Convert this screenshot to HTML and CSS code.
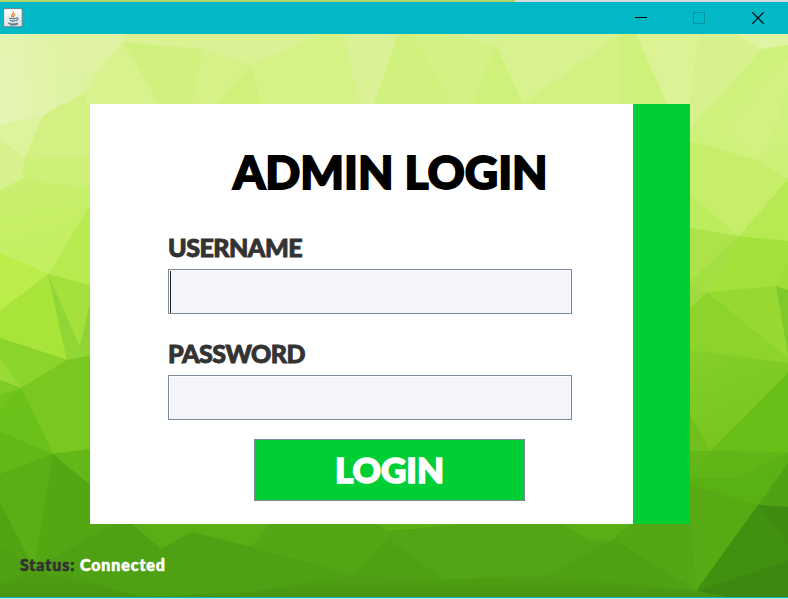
FILE: index.html
```html
<!DOCTYPE html>
<html lang="en">
<head>
<meta charset="utf-8">
<title>Admin Login</title>
<link rel="stylesheet" href="styles.css">
</head>
<body>
<div class="backdrop"></div>
<header class="titlebar">
  <svg class="java" viewBox="0 0 20 20" aria-hidden="true">
    <defs><linearGradient id="tile" x2="0" y2="1"><stop stop-color="#fff"/><stop offset="1" stop-color="#dddfe0"/></linearGradient></defs>
    <rect x=".6" y=".6" width="18.6" height="18.2" rx="1.5" fill="url(#tile)" stroke="#66858b"/>
    <path d="M10.3 3.5c1.5 2-3.4 3-1 5.7M12.5 6.2c-3 1.3-1.5 2-2.2 3.4" fill="none" stroke="#ee8434" stroke-width="1.4"/>
    <path d="M6 10.3q3.500 1 7 0M7 12.600q3 1 5.500 0M13 10q3-.5 1.800 1.300-.7.900-2 1.300M5 15q5 2 9.500 0M7 16.800q5 .7 8-1" fill="none" stroke="#547991" stroke-width="1.100"/>
  </svg>
  <div class="controls">
    <svg viewBox="0 0 12 12" aria-hidden="true"><path d="M0 5.500h12" stroke="#000"/></svg>
    <svg viewBox="0 0 12 12" aria-hidden="true"><path d="M.5.5h11v11H.5z" fill="none" stroke="#0292a0"/></svg>
    <svg viewBox="0 0 12 12" aria-hidden="true"><path d="M.3.3l11.400 11.400M11.700.3L.3 11.700" stroke="#000" stroke-width="1.200"/></svg>
  </div>
</header>
<main class="content">
  <svg class="facets" viewBox="0 34 788 563" preserveAspectRatio="none" aria-hidden="true">
    <defs>
      <linearGradient id="corner" gradientUnits="userSpaceOnUse" x1="0" y1="80" x2="100" y2="70"><stop stop-color="#e5f5b4"/><stop offset="1" stop-color="#dcf29b"/></linearGradient>
      <linearGradient id="lime" gradientUnits="userSpaceOnUse" x1="0" y1="180" x2="20" y2="270"><stop stop-color="#c9ef6f"/><stop offset="1" stop-color="#c3ef60"/></linearGradient>
      <linearGradient id="floor" x2="0" y2="1"><stop stop-color="#4f9f13"/><stop offset="1" stop-color="#499611"/></linearGradient>
      <linearGradient id="leaf" gradientUnits="userSpaceOnUse" x1="690" y1="350" x2="730" y2="450"><stop stop-color="#84cf29"/><stop offset="1" stop-color="#78c520"/></linearGradient>
    </defs>
    <path fill="#d4f184" d="M0 34H788V190H0z"/>
    <path fill="url(#corner)" d="M0 34H250L200 49 123 42 95 75 86 92 43 116 0 125z"/>
    <path fill="#dff3a3" d="M66 34H145L123 42 95 72 61 70z"/>
    <path fill="#daf294" d="M123 34H350L330 40 252 65 202 49 123 42z"/>
    <path fill="#d8f28e" d="M123 42L95 74 86 92V104H165z"/>
    <path fill="#d1f17f" d="M123 42L202 49 192 104H159z"/>
    <path fill="#d5f188" d="M202 49L252 65 217 104H192z"/>
    <path fill="#cff079" d="M252 65L217 104H260z"/>
    <path fill="#d5f287" d="M252 65L320 34H343L360 104H260z"/>
    <path fill="#daf295" d="M343 34H398L388 64 374 104H360z"/>
    <path fill="#d0f17e" d="M398 34H412L453 104H374L388 64z"/>
    <path fill="#d3f185" d="M412 34H450L496 45 472 104H453z"/>
    <path fill="#daf296" d="M450 34H510L496 45z"/>
    <path fill="#cef17b" d="M496 45L522 102V104H472z"/>
    <path fill="#d8f290" d="M510 34H620L528 101 522 102 496 45z"/>
    <path fill="#d1f181" d="M620 34H626V104H524L528 101z"/>
    <path fill="#cdf17b" d="M620 34H636L667 104H620z"/>
    <path fill="#dbf295" d="M636 34H699L690 104H667z"/>
    <path fill="#d7f18e" d="M699 34H735L762 49 717 100 690 128V104z"/>
    <path fill="#e0f4a2" d="M735 34H788V45L762 49z"/>
    <path fill="#cef17b" d="M762 49L788 45V147L757 160 690 141V128L717 100z"/>
    <path fill="#d2f181" d="M775 70L788 60V88L769 143 757 160 725 128z"/>
    <path fill="#ddf39c" d="M0 125L43 116 25 158 0 139z"/>
    <path fill="#d7f18e" d="M0 139L25 158 22 179 0 190z"/>
    <path fill="#d2f182" d="M43 116L62 104H90V157L25 159z"/>
    <path fill="#cdf077" d="M25 159L90 157V189L22 180z"/>
    <path fill="url(#lime)" d="M0 190L22 179 90 188V206L48 274 0 253z"/>
    <path fill="#b7eb50" d="M90 206V285L48 274z"/>
    <path fill="#bced4b" d="M0 253L48 274 0 311z"/>
    <path fill="#a9e538" d="M0 311L48 274 67 360 0 338z"/>
    <path fill="#90d634" d="M48 274L80 346 90 345V356L67 360z"/>
    <path fill="#a4e13c" d="M48 274L90 285V302L80 347z"/>
    <path fill="#8fd336" d="M90 302L80 347 90 345z"/>
    <path fill="#8bd42b" d="M0 338L67 360 21 388 0 380z"/>
    <path fill="#99da36" d="M0 357L21 388 0 380z"/>
    <path fill="#7fcb25" d="M0 380L21 388 0 395z"/>
    <path fill="#71c31d" d="M0 395L21 388 0 412z"/>
    <path fill="#78c820" d="M21 388L67 360 90 356V449L53 454z"/>
    <path fill="#6bc11a" d="M0 412L21 388 53 454 0 432z"/>
    <path fill="#62b817" d="M0 432L53 454 0 474z"/>
    <path fill="#59af15" d="M0 474L53 454 37 560 34 568 0 503z"/>
    <path fill="#51a412" d="M0 503L34 568 0 545z"/>
    <path fill="#63b718" d="M53 454L90 449V485z"/>
    <path fill="#53a713" d="M53 454L90 485V524H115L37 568 34 568z"/>
    <path fill="#c6ee6b" d="M690 141L757 160 788 179 739 236 690 195z"/>
    <path fill="#cdf077" d="M757 160L788 147V179z"/>
    <path fill="#beec5f" d="M690 195L739 236 690 228z"/>
    <path fill="#b7e952" d="M739 236L788 179V241z"/>
    <path fill="#ade24b" d="M690 228L739 236 690 281z"/>
    <path fill="#a3df40" d="M690 281L739 236 712 291 707 292 690 285z"/>
    <path fill="#a4e13b" d="M739 236L788 241V260L776 286 712 291z"/>
    <path fill="#9fde35" d="M788 260V290L776 286z"/>
    <path fill="#a0da40" d="M690 285L707 292 690 308z"/>
    <path fill="#97d931" d="M707 292L776 286 788 350V363z"/>
    <path fill="#80c92a" d="M776 286L788 290V355z"/>
    <path fill="#8cd42b" d="M690 308L707 292 788 358V363L690 350z"/>
    <path fill="url(#leaf)" d="M690 350L788 363V373L711 451 690 451z"/>
    <path fill="#71bf1d" d="M690 415L711 451H690z"/>
    <path fill="#68be16" d="M711 451L788 373V452z"/>
    <path fill="#60b617" d="M690 451L788 452V453L735 478 690 479z"/>
    <path fill="#65b619" d="M690 451H711L690 470z"/>
    <path fill="#5ab114" d="M690 485V478L735 478 788 453V463L758 505z"/>
    <path fill="#50a213" d="M788 463V507L758 505z"/>
    <path fill="#57aa13" d="M690 485L758 505 696 591 690 540z"/>
    <path fill="#42900f" d="M758 505L788 507V560L696 591z"/>
    <path fill="#3f8a11" d="M758 505L788 507V545z"/>
    <path fill="#3d8811" d="M788 560L696 591 725 597H788z"/>
    <path fill="#4ea112" d="M115 524H690L696 591V597H0V545L34 568z"/>
    <path fill="#58ae14" d="M132 524H270L252 547 192 532 161 549z"/>
    <path fill="#53a614" d="M270 524H382L394 531 354 575 279 555 252 547z"/>
    <path fill="#5bb116" d="M378 524H470L388 531z"/>
    <path fill="#52a514" d="M388 532L460 524H565L614 540 546 576 445 579 394 544z"/>
    <path fill="#5aae15" d="M562 524H632L612 540 592 541z"/>
    <path fill="#53a614" d="M632 524H690L696 591 614 540z"/>
    <path fill="url(#floor)" d="M0 584L34 570 90 582 140 597H0z"/>
    <path fill="url(#floor)" d="M250 592L354 575 445 579 546 576 696 591 725 597H140z"/>
  </svg>
  <section class="card">
    <form class="form">
      <h1>ADMIN LOGIN</h1>
      <label class="user-label" for="user">USERNAME</label>
      <div class="field focused"><input id="user" type="text"></div>
      <label for="pass">PASSWORD</label>
      <div class="field"><input id="pass" type="password"></div>
      <button type="button"><span>LOGIN</span></button>
    </form>
  </section>
  <p class="status">Status: <span>Connected</span></p>
</main>
</body>
</html>
```
FILE: styles.css
```css
* { box-sizing: border-box; }
body {
  margin: 0;
  height: 599px;
  overflow: hidden;
  display: flex;
  flex-direction: column;
  background: #d6e5df;
  font-family: Lato, "Open Sans", sans-serif;
  font-weight: 900;
}
.backdrop { height: 2px; background: linear-gradient(90deg, #b0d568 515px, #d8dadb 515px); }
.titlebar {
  height: 32px;
  padding: 0 24px 0 3px;
  display: flex;
  align-items: center;
  justify-content: space-between;
  background: #02b7c6;
}
.java { width: 20px; height: 20px; }
.controls { display: flex; gap: 47px 46px; }
.controls svg { width: 12px; height: 12px; display: block; }
.controls svg:nth-child(2) { margin-right: 1px; }
.content {
  position: relative;
  height: 564px;
  padding: 70px 0 0 90px;
  border-bottom: 1px solid #08b5bb;
  background: linear-gradient(#d4f184 20%, #bdec5c 40%, #8cd42b 56%, #68be16 72%, #54a713 85%);
}
.facets { position: absolute; inset: 0; width: 788px; height: 563px; }
.facets path { stroke-width: 0; }
.card {
  position: relative;
  width: 600px;
  height: 420px;
  background: #fff;
  border-right: 57px solid #00ce35;
}
.form { padding: 39px 61px 0 78px; display: flex; flex-direction: column; }
h1 {
  margin: 0 0 28px 65px;
  font-size: 46px;
  line-height: 58px;
  font-weight: 900;
  color: #000;
  white-space: nowrap;
  -webkit-text-stroke: 1.8px #000;
}
label {
  font-size: 25px;
  line-height: 36px;
  margin-bottom: 4px;
  color: #333;
  white-space: nowrap;
  letter-spacing: -0.5px;
  -webkit-text-stroke: 0.9px #333;
}
.field {
  position: relative;
  height: 45px;
  margin-bottom: 21px;
  border: 1px solid #7a8a99;
  background: #f4f5fa;
  box-shadow: inset 1px 1px #fff;
}
.field.focused::before { content: ""; position: absolute; left: 1px; top: 1px; width: 1px; height: 42px; background: #222; }
input { display: block; width: 100%; height: 100%; border: 0; padding: 0 4px; background: transparent; outline: 0; }
button {
  width: 271px;
  height: 62px;
  margin: -2px 0 0 86px;
  padding: 0 0 2px;
  border: 1px solid #7a8a99;
  background: #00ce35;
  color: #fff;
  font: 900 35px/58px Lato, "Open Sans", sans-serif;
  -webkit-text-stroke: 1.6px #fff;
}
.status {
  position: relative;
  margin: 31px 0 0 -70px;
  font-size: 16px;
  line-height: 20px;
  color: #333;
  white-space: nowrap;
  letter-spacing: 0.9px;
  -webkit-text-stroke: 0.6px #333;
}
.status span { color: #fff; -webkit-text-stroke-color: #fff; }
```
